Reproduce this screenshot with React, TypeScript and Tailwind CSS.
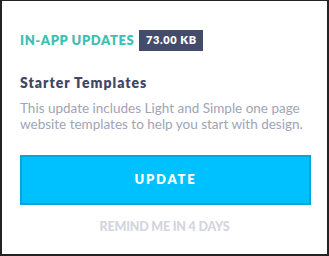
export default function App() {
  return (
    <div
      className="h-[256px] w-[329px] border-t border-l-2 border-r-2 border-b-2 border-[#232323] bg-white"
      style={{ fontFamily: "Lato, 'Noto Sans', sans-serif" }}
    >
      <div className="flex flex-col px-[18px] pt-[29px]">
        {/* Header */}
        <div className="flex items-center gap-[5px]">
          <span className="text-[13px] font-extrabold tracking-[0.6px] text-[#3ebfb3] leading-none">
            IN-APP UPDATES
          </span>
          <span className="flex h-[21px] w-[64px] items-center justify-center bg-[#444c6b] text-[11px] font-extrabold tracking-[0.6px] text-white">
            73.00 KB
          </span>
        </div>

        {/* Title + description */}
        <h2 className="mt-[22px] text-[14px] font-extrabold tracking-[1px] text-[#3f4666] leading-[20px]">
          Starter Templates
        </h2>
        <p className="mt-[7px] text-[13.5px] leading-[16px] text-[#a0a4b5]">
          This update includes Light and Simple one page website templates to help you start with design.
        </p>

        {/* Actions */}
        <button className="mt-[23px] flex h-[50px] w-[291px] items-center justify-center border-2 border-[#06a6d8] bg-[#00c1ff] text-[13px] font-extrabold tracking-[1.8px] text-white">
          UPDATE
        </button>
        <button className="mt-[13px] self-center text-[12.5px] font-black tracking-[-0.2px] text-[#d3d5dd]">
          REMIND ME IN 4 DAYS
        </button>
      </div>
    </div>
  );
}
